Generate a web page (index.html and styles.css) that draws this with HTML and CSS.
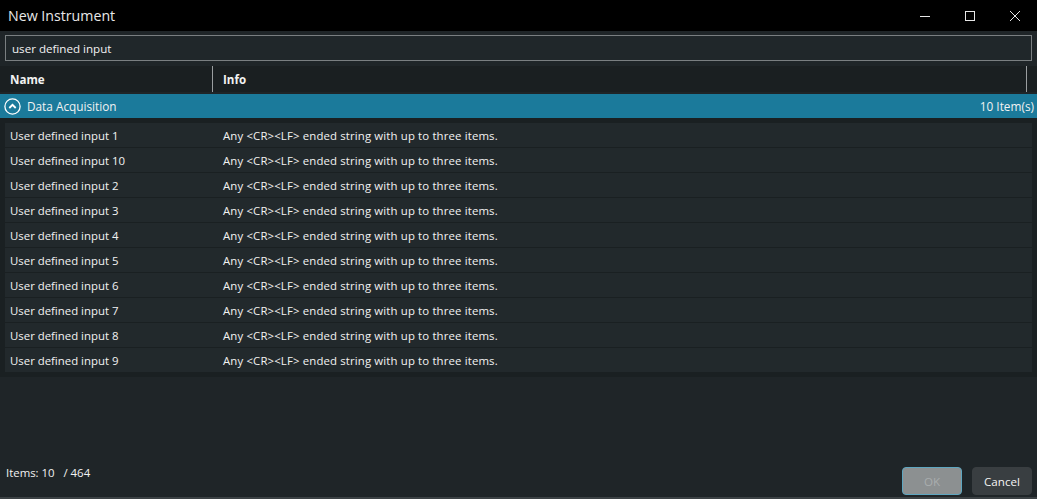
FILE: index.html
```html
<!DOCTYPE html>
<html>
<head>
<meta charset="utf-8">
<link rel="stylesheet" href="styles.css">
</head>
<body>
<div class="window">
  <div class="titlebar">
    <span class="title">New Instrument</span>
    <div class="controls">
      <span class="ctl"><svg width="12" height="12" viewBox="0 0 12 12"><path d="M1 6.5H11" stroke="#e6e6e6" stroke-width="1"/></svg></span>
      <span class="ctl"><svg width="12" height="12" viewBox="0 0 12 12"><rect x="1.5" y="1.5" width="9" height="9" fill="none" stroke="#e6e6e6" stroke-width="1"/></svg></span>
      <span class="ctl"><svg width="12" height="12" viewBox="0 0 12 12"><path d="M1 1L11 11M11 1L1 11" stroke="#e6e6e6" stroke-width="1"/></svg></span>
    </div>
  </div>
  <div class="content">
    <div class="search">user defined input</div>
    <div class="colheader">
      <div class="col-name">Name</div>
      <div class="col-info">Info</div>
      <div class="col-end"></div>
    </div>
    <div class="group">
      <svg class="chev" width="17" height="17" viewBox="0 0 17 17"><circle cx="8.5" cy="8.5" r="7.6" fill="none" stroke="#ffffff" stroke-width="1.3"/><path d="M5.3 10L8.5 6.8L11.7 10" fill="none" stroke="#ffffff" stroke-width="1.8"/></svg>
      <span class="gname">Data Acquisition</span>
      <span class="gcount">10 Item(s)</span>
    </div>
    <div class="list">
      <div class="row"><span class="c1">User defined input 1</span><span class="c2">Any &lt;CR&gt;&lt;LF&gt; ended string with up to three items.</span></div>
      <div class="row"><span class="c1">User defined input 10</span><span class="c2">Any &lt;CR&gt;&lt;LF&gt; ended string with up to three items.</span></div>
      <div class="row"><span class="c1">User defined input 2</span><span class="c2">Any &lt;CR&gt;&lt;LF&gt; ended string with up to three items.</span></div>
      <div class="row"><span class="c1">User defined input 3</span><span class="c2">Any &lt;CR&gt;&lt;LF&gt; ended string with up to three items.</span></div>
      <div class="row"><span class="c1">User defined input 4</span><span class="c2">Any &lt;CR&gt;&lt;LF&gt; ended string with up to three items.</span></div>
      <div class="row"><span class="c1">User defined input 5</span><span class="c2">Any &lt;CR&gt;&lt;LF&gt; ended string with up to three items.</span></div>
      <div class="row"><span class="c1">User defined input 6</span><span class="c2">Any &lt;CR&gt;&lt;LF&gt; ended string with up to three items.</span></div>
      <div class="row"><span class="c1">User defined input 7</span><span class="c2">Any &lt;CR&gt;&lt;LF&gt; ended string with up to three items.</span></div>
      <div class="row"><span class="c1">User defined input 8</span><span class="c2">Any &lt;CR&gt;&lt;LF&gt; ended string with up to three items.</span></div>
      <div class="row"><span class="c1">User defined input 9</span><span class="c2">Any &lt;CR&gt;&lt;LF&gt; ended string with up to three items.</span></div>
    </div>
    <div class="spacer"></div>
    <div class="footer">
      <span class="count">Items: 10&nbsp;&nbsp;&nbsp;/ 464</span>
      <div class="buttons">
        <button class="btn ok">OK</button>
        <button class="btn cancel">Cancel</button>
      </div>
    </div>
  </div>
</div>
</body>
</html>
```
FILE: styles.css
```css
html, body {
  margin: 0;
  padding: 0;
  background: #1f2528;
}
body {
  font-family: "Open Sans", "Noto Sans", "Liberation Sans", sans-serif;
  font-size: 11.4px;
  color: #f2f2f2;
}
.window {
  width: 1037px;
  height: 499px;
  display: flex;
  flex-direction: column;
  box-sizing: border-box;
  border-bottom: 2px solid #3c4245;
  overflow: hidden;
}
.titlebar {
  height: 31px;
  background: #000000;
  display: flex;
  align-items: center;
  justify-content: space-between;
  flex-shrink: 0;
}
.title {
  margin-left: 8px;
  font-size: 14.2px;
  color: #e8e8e8;
}
.controls {
  display: flex;
  height: 100%;
}
.ctl {
  width: 45px;
  display: flex;
  align-items: center;
  justify-content: center;
  padding-top: 1px;
}
.content {
  flex: 1;
  display: flex;
  flex-direction: column;
  background: #1f2528;
}
.search {
  margin: 4px 5px 0 5px;
  height: 24px;
  border: 1px solid #7a7f81;
  background: #20272a;
  display: flex;
  align-items: center;
  padding-left: 6px;
  font-size: 11.6px;
  color: #f2f2f2;
}
.colheader {
  margin-top: 5px;
  height: 26px;
  background: #1a1f21;
  display: flex;
  align-items: stretch;
  font-weight: 700;
  font-size: 11.6px;
}
.col-name {
  width: 202px;
  padding-left: 10px;
  display: flex;
  align-items: center;
  border-right: 1px solid #9a9ea0;
}
.col-info {
  flex: 1;
  padding-left: 10px;
  display: flex;
  align-items: center;
  border-right: 1px solid #9a9ea0;
}
.col-end {
  width: 10px;
}
.group {
  margin-top: 2px;
  height: 24px;
  background: #1b7a9b;
  display: flex;
  align-items: center;
  padding: 0 3px 0 4px;
  font-size: 11.8px;
}
.chev {
  margin-right: 6px;
}
.gname {
  flex: 1;
}
.list {
  background: #1a2022;
  padding: 5px 5px 5px 5px;
  display: flex;
  flex-direction: column;
  gap: 1px;
}
.row {
  height: 24px;
  background: #22292c;
  display: flex;
  align-items: center;
}
.c1 {
  width: 218px;
  padding-left: 5px;
  box-sizing: border-box;
}
.c2 {
  flex: 1;
  letter-spacing: 0.14px;
}
.spacer {
  flex: 1;
}
.footer {
  height: 40px;
  display: flex;
  align-items: center;
  justify-content: space-between;
  padding: 0 5px 0 6px;
}
.count {
  font-size: 11.4px;
  margin-bottom: 9px;
}
.buttons {
  display: flex;
  gap: 10px;
  margin-top: 8px;
}
.btn {
  width: 60px;
  height: 28px;
  border-radius: 4px;
  font-family: inherit;
  font-size: 11.6px;
  padding: 0;
}
.ok {
  background: #8c9091;
  border: 1px solid #5ea6c0;
  color: #a9adae;
}
.cancel {
  background: #393e41;
  border: 1px solid #393e41;
  color: #f4f4f4;
}
```
